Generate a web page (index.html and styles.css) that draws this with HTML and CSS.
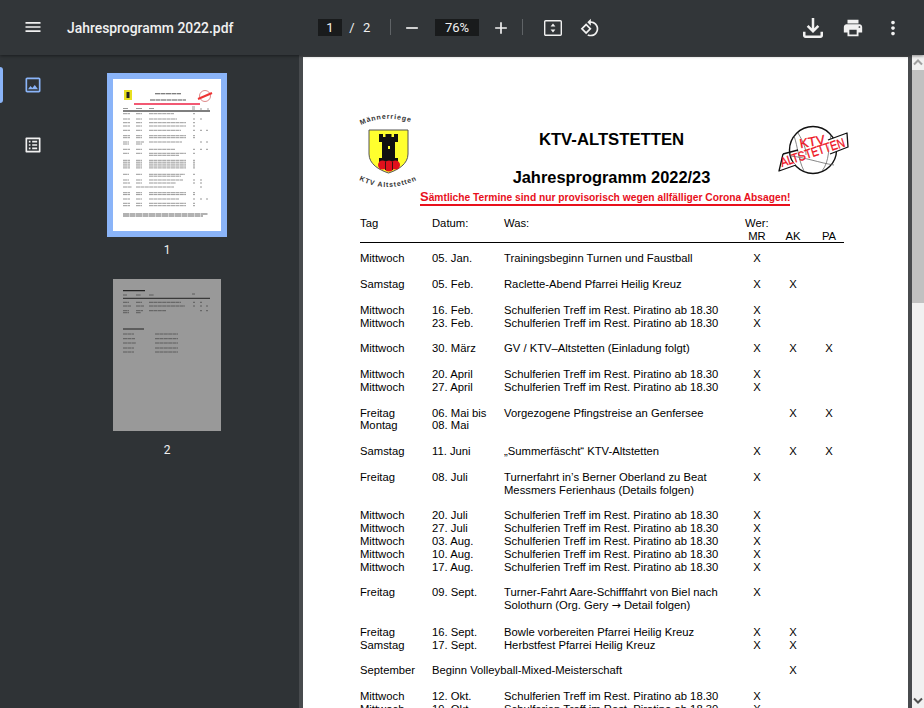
FILE: index.html
```html
<!DOCTYPE html>
<html>
	<head>
		<meta charset="UTF-8">
		<title>Jahresprogramm 2022.pdf</title>
		<link rel="stylesheet" href="styles.css">
	</head>
	<body>
		<div class="toolbar">
			<svg class="ico menu" viewBox="0 0 24 24"><path d="M3 18h18v-2H3v2zm0-5h18v-2H3v2zm0-7v2h18V6H3z"/></svg>
			<div class="filename">Jahresprogramm 2022.pdf</div>
			<div class="page-box">1</div>
			<span class="slash">/</span>
			<span class="total">2</span>
			<div class="sep sep-a"></div>
			<svg class="ico minus" viewBox="0 0 24 24"><path d="M19 13H5v-2h14v2z"/></svg>
			<div class="zoom-box">76%</div>
			<svg class="ico plus" viewBox="0 0 24 24"><path d="M19 13h-6v6h-2v-6H5v-2h6V5h2v6h6v2z"/></svg>
			<div class="sep sep-b"></div>
			<svg class="ico fit" viewBox="0 0 20 18"><rect x="1.7" y="1.7" width="16.6" height="14.6" rx="1" fill="none" stroke="#f1f1f1" stroke-width="1.4"/><path d="M10 4.6l2.4 3h-4.800zM10 13.400l-2.400-3h4.800z"/></svg>
			<svg class="ico rotate" viewBox="0 0 24 24"><path d="M7.340 6.410L.860 12.900l6.490 6.480 6.490-6.480-6.500-6.490zM3.690 12.900l3.660-3.660L11 12.900l-3.660 3.660-3.650-3.660zm15.670-6.260C17.610 4.880 15.300 4 13 4V.760L8.760 5 13 9.240V6c1.790 0 3.580.680 4.950 2.050 2.730 2.730 2.730 7.170 0 9.900C16.580 19.320 14.790 20 13 20c-.970 0-1.940-.210-2.840-.610l-1.490 1.490C10.020 21.620 11.510 22 13 22c2.300 0 4.610-.880 6.360-2.640 3.520-3.510 3.520-9.210 0-12.720z"/></svg>
			<svg class="ico download" viewBox="0 0 24 24"><path d="M18 15v3H6v-3H4v3c0 1.100.900 2 2 2h12c1.100 0 2-.900 2-2v-3h-2zm-1-4l-1.410-1.410L13 12.170V4h-2v8.170L8.410 9.590 7 11l5 5 5-5z"/></svg>
			<svg class="ico print" viewBox="0 0 24 24"><path d="M19 8H5c-1.660 0-3 1.340-3 3v6h4v4h12v-4h4v-6c0-1.660-1.340-3-3-3zm-3 11H8v-5h8v5zm3-7c-.550 0-1-.450-1-1s.450-1 1-1 1 .450 1 1-.450 1-1 1zm-1-9H6v4h12V3z"/></svg>
			<svg class="ico more" viewBox="0 0 24 24"><path d="M12 8c1.100 0 2-.900 2-2s-.900-2-2-2-2 .900-2 2 .900 2 2 2zm0 2c-1.100 0-2 .900-2 2s.900 2 2 2 2-.900 2-2-.900-2-2-2zm0 6c-1.100 0-2 .900-2 2s.900 2 2 2 2-.900 2-2-.900-2-2-2z"/></svg>
		</div>

		<div class="content">
			<div class="sidebar">
				<div class="rail">
					<div class="rail-btn active">
						<svg class="ico" viewBox="0 0 24 24"><path d="M19 5v14H5V5h14m0-2H5c-1.100 0-2 .900-2 2v14c0 1.100.900 2 2 2h14c1.100 0 2-.900 2-2V5c0-1.100-.900-2-2-2zm-4.860 8.860l-3 3.870L9 13.140 6 17h12l-3.860-5.140z"/></svg>
					</div>
					<div class="rail-btn">
						<svg class="ico" viewBox="0 0 24 24"><path d="M19 5v14H5V5h14m1.100-2H3.900c-.500 0-.900.400-.900.900v16.200c0 .400.400.900.900.900h16.200c.400 0 .900-.500.900-.900V3.900c0-.500-.500-.900-.900-.900zM11 7h6v2h-6V7zm0 4h6v2h-6v-2zm0 4h6v2h-6zM7 7h2v2H7zm0 4h2v2H7zm0 4h2v2H7z"/></svg>
					</div>
				</div>
				<div class="thumbs">
					<div class="thumb selected">
						<svg class="thumb-page" viewBox="0 0 108 152">
							<rect x="11" y="11" width="8" height="10" fill="#e8e020"/>
							<rect x="13.500" y="13" width="3" height="6" fill="#222"/>
							<circle cx="92" cy="17" r="5.500" fill="#fff" stroke="#d88" stroke-width="1"/>
							<path d="M85 20l14-6" stroke="#e33" stroke-width="2"/>
							<path d="M42 14.700h26M37 21h36" stroke="#555" stroke-width="1.100" stroke-dasharray="5 .5"/>
							<path d="M21 25h66" stroke="#e24" stroke-width="1.300"/>
							<path d="M10 32h87" stroke="#000" stroke-width="1.100"/>
							<path d="M10 29.500h5M23 29.500h6M36 29.500h5M79 28h3M79 30h3M87 30h2M94 30h2" stroke="#999" stroke-width="1"/>
							<path class="mini" d="M10 34.700h7M23 34.700h6M36 34.700h25M80 34.700h2M10 40h7M23 40h6M36 40h28M80 40h2M87 40h2M10 43.700h7M23 43.700h6M36 43.700h37M80 43.700h2M10 47h7M23 47h6M36 47h37M80 47h2M10 51.300h7M23 51.300h6M36 51.300h32M80 51.300h2M87 51.300h2M93 51.300h2M10 56.700h7M23 56.700h6M36 56.700h37M80 56.700h2M10 58.700h7M23 58.700h6M36 58.700h37M80 58.700h2M10 63h6M23 63h8M36 63h33M87 63h2M93 63h2M10 65h6M23 65h6M10 70.300h7M23 70.300h6M36 70.300h26M80 70.300h2M87 70.300h2M93 70.300h2M10 74.300h6M23 74.300h6M36 74.300h37M80 74.300h2M36 76.300h30M10 81.300h7M23 81.300h6M36 81.300h37M80 81.300h2M10 83.200h7M23 83.200h6M36 83.200h37M80 83.200h2M10 85.100h7M23 85.100h6M36 85.100h37M80 85.100h2M10 87h7M23 87h6M36 87h37M80 87h2M10 88.900h7M23 88.900h6M36 88.900h37M80 88.900h2M10 95.300h6M23 95.300h6M36 95.300h36M80 95.300h2M36 97.200h32M10 101h6M23 101h6M36 101h34M80 101h2M87 101h2M10 104h7M23 104h6M36 104h27M80 104h2M87 104h2M10 108h9M23 108h38M87 108h2M10 113.700h7M23 113.700h6M36 113.700h37M80 113.700h2M10 115.600h7M23 115.600h6M36 115.600h37M80 115.600h2M10 120h7M23 120h6M36 120h30M80 120h2M87 120h2M93 120h2M10 124.300h7M23 124.300h6M36 124.300h37M80 124.300h2M10 126.700h7M23 126.700h6M36 126.700h37M80 126.700h2"/>
							<path d="M10 135h85M10 137h80" stroke="#666" stroke-width="1.200" stroke-dasharray="6 .5"/>
						</svg>
						<div class="thumb-num">1</div>
					</div>
					<div class="thumb">
						<svg class="thumb-page dim" viewBox="0 0 108 152">
							<path d="M10 11.700h22M10 50h21" stroke="#222" stroke-width="1.200"/>
							<path d="M10 19.300h87" stroke="#222" stroke-width="1"/>
							<path class="mini dark" d="M10 16h4M23 16h5M36 16h5M79 15h3M10 23.300h6M23 23.300h6M36 23.300h32M80 23.300h2M87 23.300h2M10 27h8M23 27h8M36 27h36M80 27h2M87 27h2M93 27h2M10 31.700h6M23 31.700h7M36 31.700h17M87 31.700h2M93 31.700h2M10 33.700h6M23 33.700h5M10 55h11M42 55h23M10 59.700h12M42 59.700h23M10 64h13M42 64h23M10 69h11M42 69h23M10 73h11M42 73h23"/>
						</svg>
						<div class="thumb-num">2</div>
					</div>
				</div>
			</div>

			<div class="viewer">
				<div class="page">
					<div class="head">
						<svg class="logo" viewBox="0 0 62 80">
							<defs>
								<path id="arc-top" d="M3 13Q28 1 58 12"/>
								<path id="arc-bottom" d="M1 68Q30 83 63 66"/>
							</defs>
							<text class="logo-txt"><textPath href="#arc-top">Männerriege</textPath></text>
							<text class="logo-txt"><textPath href="#arc-bottom">KTV Altstetten</textPath></text>
							<path d="M11 18H50V42C50 52 40 58 30.500 61C21 58 11 52 11 42Z" fill="#ffff2e" stroke="#555" stroke-width="1"/>
							<path d="M21 22h4v3h2.500v-3h6v3h2.500v-3h4v8h-3v16h3v4h-19v-4h3V30h-3z" fill="#111"/>
							<rect x="30" y="34" width="2" height="3" fill="#ffff2e"/>
							<circle cx="24.500" cy="53" r="4.500" fill="#e0101c"/>
							<circle cx="31" cy="54" r="5.500" fill="#e0101c"/>
							<circle cx="37.500" cy="53" r="4.500" fill="#e0101c"/>
							<path d="M27.500 50v8M34.500 50v8" stroke="#111" stroke-width=".8"/>
						</svg>
						<div class="head-mid">
							<div class="title">KTV-ALTSTETTEN</div>
							<div class="title title-2">Jahresprogramm 2022/23</div>
							<div class="notice"><span class="big-s">S</span>ämtliche Termine sind nur provisorisch wegen allfälliger Corona Absagen!</div>
						</div>
						<svg class="ball" viewBox="0 0 76 54">
							<circle cx="37" cy="27" r="23.500" fill="#fff" stroke="#111" stroke-width="1.400"/>
							<path d="M18 13C22 24 22 36 28 48M22 10C28 20 30 26 30 32M55 12C52 24 54 38 46 48M14 33C28 34 44 40 58 42" fill="none" stroke="#555" stroke-width=".7"/>
							<path d="M7 31L22 27M52 17L71 10L72 24L54 31M20 42L3 48L7 31" fill="#fff" stroke="#111" stroke-width="1.300" stroke-linejoin="round"/>
							<text class="ball-txt" transform="translate(37 23) rotate(-10)" text-anchor="middle">KTV</text>
							<text class="ball-txt" transform="translate(6 44) rotate(-18)" textLength="67" lengthAdjust="spacingAndGlyphs">ALTSTETTEN</text>
						</svg>
					</div>

					<div class="row"><span>Tag</span><span>Datum:</span><span>Was:</span><span class="wer">Wer:</span></div>
					<div class="row row-rule"><span class="mr">MR</span><span class="ak">AK</span><span class="pa">PA</span></div>

					<div class="grp">
						<div class="row"><span>Mittwoch</span><span>05. Jan.</span><span>Trainingsbeginn Turnen und Faustball</span><span class="mr">X</span></div>
					</div>
					<div class="grp">
						<div class="row"><span>Samstag</span><span>05. Feb.</span><span>Raclette-Abend Pfarrei Heilig Kreuz</span><span class="mr">X</span><span class="ak">X</span></div>
					</div>
					<div class="grp">
						<div class="row"><span>Mittwoch</span><span>16. Feb.</span><span>Schulferien Treff im Rest. Piratino ab 18.30</span><span class="mr">X</span></div>
						<div class="row"><span>Mittwoch</span><span>23. Feb.</span><span>Schulferien Treff im Rest. Piratino ab 18.30</span><span class="mr">X</span></div>
					</div>
					<div class="grp">
						<div class="row"><span>Mittwoch</span><span>30. März</span><span>GV / KTV–Altstetten (Einladung folgt)</span><span class="mr">X</span><span class="ak">X</span><span class="pa">X</span></div>
					</div>
					<div class="grp">
						<div class="row"><span>Mittwoch</span><span>20. April</span><span>Schulferien Treff im Rest. Piratino ab 18.30</span><span class="mr">X</span></div>
						<div class="row"><span>Mittwoch</span><span>27. April</span><span>Schulferien Treff im Rest. Piratino ab 18.30</span><span class="mr">X</span></div>
					</div>
					<div class="grp">
						<div class="row"><span>Freitag</span><span>06. Mai bis</span><span>Vorgezogene Pfingstreise an Genfersee</span><span class="ak">X</span><span class="pa">X</span></div>
						<div class="row"><span>Montag</span><span>08. Mai</span></div>
					</div>
					<div class="grp">
						<div class="row"><span>Samstag</span><span>11. Juni</span><span>„Summerfäscht“ KTV-Altstetten</span><span class="mr">X</span><span class="ak">X</span><span class="pa">X</span></div>
					</div>
					<div class="grp">
						<div class="row"><span>Freitag</span><span>08. Juli</span><span>Turnerfahrt in’s Berner Oberland zu Beat<br>Messmers Ferienhaus (Details folgen)</span><span class="mr">X</span></div>
					</div>
					<div class="grp">
						<div class="row"><span>Mittwoch</span><span>20. Juli</span><span>Schulferien Treff im Rest. Piratino ab 18.30</span><span class="mr">X</span></div>
						<div class="row"><span>Mittwoch</span><span>27. Juli</span><span>Schulferien Treff im Rest. Piratino ab 18.30</span><span class="mr">X</span></div>
						<div class="row"><span>Mittwoch</span><span>03. Aug.</span><span>Schulferien Treff im Rest. Piratino ab 18.30</span><span class="mr">X</span></div>
						<div class="row"><span>Mittwoch</span><span>10. Aug.</span><span>Schulferien Treff im Rest. Piratino ab 18.30</span><span class="mr">X</span></div>
						<div class="row"><span>Mittwoch</span><span>17. Aug.</span><span>Schulferien Treff im Rest. Piratino ab 18.30</span><span class="mr">X</span></div>
					</div>
					<div class="grp">
						<div class="row"><span>Freitag</span><span>09. Sept.</span><span>Turner-Fahrt Aare-Schifffahrt von Biel nach<br>Solothurn (Org. Gery <span class="arrow">→</span> Detail folgen)</span><span class="mr">X</span></div>
					</div>
					<div class="grp">
						<div class="row"><span>Freitag</span><span>16. Sept.</span><span>Bowle vorbereiten Pfarrei Heilig Kreuz</span><span class="mr">X</span><span class="ak">X</span></div>
						<div class="row"><span>Samstag</span><span>17. Sept.</span><span>Herbstfest Pfarrei Heilig Kreuz</span><span class="mr">X</span><span class="ak">X</span></div>
					</div>
					<div class="grp">
						<div class="row"><span>September</span><span class="wide">Beginn Volleyball-Mixed-Meisterschaft</span><span class="ak">X</span></div>
					</div>
					<div class="grp">
						<div class="row"><span>Mittwoch</span><span>12. Okt.</span><span>Schulferien Treff im Rest. Piratino ab 18.30</span><span class="mr">X</span></div>
						<div class="row"><span>Mittwoch</span><span>19. Okt.</span><span>Schulferien Treff im Rest. Piratino ab 18.30</span><span class="mr">X</span></div>
					</div>
				</div>
				<div class="scrollbar">
					<div class="sb-btn"><svg viewBox="0 0 12 12"><path d="M2 8l4-4 4 4" fill="none" stroke="#a0a0a0" stroke-width="2"/></svg></div>
					<div class="sb-thumb"></div>
					<div class="sb-track"></div>
					<div class="sb-btn"><svg viewBox="0 0 12 12"><path d="M2 4l4 4 4-4" fill="none" stroke="#505050" stroke-width="2"/></svg></div>
				</div>
			</div>
		</div>
	</body>
</html>
```

FILE: styles.css
```css
html,body{
	margin: 0;
	height: 100%;
	overflow: hidden;
}
body{
	display: flex;
	flex-direction: column;
	background: #323639;
	font-family: Roboto,"Liberation Sans",sans-serif;
}
.ico{
	display: block;
	flex: none;
	fill: #f1f1f1;
}

/* toolbar */
.toolbar{
	flex: none;
	position: relative;
	z-index: 2;
	display: flex;
	align-items: center;
	height: 55px;
	background: #323639;
	color: #f1f1f1;
	box-shadow: 0 1px 3px rgba(0,0,0,.45);
	font-size: 13px;
}
.menu{
	width: 20px;
	height: 20px;
	margin: 0 0 1px 23px;
}
.filename{
	width: 251px;
	margin-left: 24px;
	font-size: 13.900px;
	font-weight: 500;
	white-space: nowrap;
}
.page-box,.zoom-box{
	height: 17px;
	line-height: 17px;
	margin-top: -1px;
	background: #191b1c;
	text-align: center;
}
.page-box{
	width: 24px;
}
.slash{
	margin-left: 4px;
	width: 12px;
	text-align: center;
}
.total{
	margin-left: 5px;
	width: 10px;
}
.sep{
	width: 1px;
	height: 16px;
	margin-top: -1px;
	background: #5f6366;
}
.sep-a{
	margin-left: 17px;
}
.minus{
	width: 20px;
	height: 20px;
	margin-left: 11px;
}
.zoom-box{
	width: 44px;
	margin-left: 13px;
}
.plus{
	width: 20px;
	height: 20px;
	margin-left: 12px;
}
.sep-b{
	margin-left: 11px;
}
.fit{
	width: 20px;
	height: 18px;
	margin-left: 20px;
}
.rotate{
	width: 20px;
	height: 20px;
	margin-left: 17px;
}
.download{
	width: 30px;
	height: 30px;
	margin-left: auto;
}
.print{
	width: 22px;
	height: 22px;
	margin-left: 14px;
}
.more{
	width: 22px;
	height: 22px;
	margin: 0 20px 0 18px;
}

/* main area */
.content{
	flex: 1;
	display: flex;
	min-height: 0;
}
.sidebar{
	flex: none;
	display: flex;
	width: 299px;
	background: #2f3336;
}
.rail{
	flex: none;
	width: 66px;
	padding-top: 10px;
}
.rail-btn{
	position: relative;
	display: flex;
	align-items: center;
	justify-content: center;
	height: 40px;
	margin-bottom: 20px;
}
.rail-btn .ico{
	width: 20px;
	height: 20px;
}
.rail-btn.active .ico{
	fill: #8ab4f8;
}
.rail-btn.active::before{
	content: "";
	position: absolute;
	left: 0;
	top: 2px;
	width: 3px;
	height: 36px;
	background: #8ab4f8;
	border-radius: 0 3px 3px 0;
}
.thumbs{
	flex: 1;
	padding: 18px 31px 0 0;
}
.thumb{
	display: flex;
	flex-direction: column;
	align-items: center;
	margin-bottom: 15px;
}
.thumb-page{
	display: block;
	width: 108px;
	height: 152px;
	background: #fff;
	background-clip: content-box;
	border: 6px solid transparent;
}
.thumb.selected .thumb-page{
	border-color: #8ab4f8;
}
.thumb-page.dim{
	background: #999;
	background-clip: content-box;
}
.mini{
	fill: none;
	stroke: #999;
	stroke-width: 1;
	stroke-dasharray: 4 .4;
}
.mini.dark{
	stroke: #5c5c5c;
}
.thumb-num{
	margin-top: 5px;
	line-height: 16px;
	font-size: 12px;
	color: #f1f1f1;
}

.viewer{
	flex: 1;
	display: flex;
	min-width: 0;
	background: #484b4e;
	padding-left: 4px;
}
.page{
	flex: none;
	width: 548px;
	height: 858px;
	margin-top: 2px;
	padding: 55px 0 0 57px;
	background: #fff;
	color: #000;
	font-family: "Liberation Sans",Arial,sans-serif;
	font-size: 11.250px;
}
.head{
	display: flex;
	height: 104.800px;
}
.logo{
	flex: none;
	width: 62px;
	height: 80px;
	margin-left: -2px;
}
.logo-txt{
	font-size: 7px;
	font-weight: bold;
	letter-spacing: .9px;
	fill: #333;
}
.head-mid{
	flex: none;
	width: 383px;
	padding-top: 19px;
}
.title{
	line-height: 18px;
	font-size: 16.700px;
	font-weight: bold;
	text-align: center;
}
.title-2{
	margin-top: 19px;
	font-size: 16.400px;
}
.notice{
	width: 370px;
	margin-top: 4.500px;
	border-bottom: 2px solid #e8101c;
	line-height: 12px;
	font-size: 10.250px;
	font-weight: bold;
	color: #e8101c;
	white-space: nowrap;
}
.big-s{
	font-size: 13px;
}
.ball{
	flex: none;
	width: 76px;
	height: 54px;
	margin: 11px 0 0 -27px;
}
.ball-txt{
	font-size: 13px;
	fill: #ee1122;
	stroke: #ee1122;
	stroke-width: .3px;
}

/* table */
.row{
	display: grid;
	grid-template-columns: 72px 72px 235px 36px 36px 36px;
	width: 484px;
	line-height: 12.840px;
	white-space: nowrap;
}
.row-rule{
	border-bottom: 1px solid #000;
	margin-bottom: 9px;
	padding-bottom: 0;
}
.wer{
	margin-left: 6px;
}
.wide{
	grid-column: 2 / span 2;
}
.arrow{
	font-family: "DejaVu Sans",sans-serif;
	font-size: 11px;
}
.mr,.ak,.pa{
	grid-row: 1;
	text-align: center;
}
.mr{
	grid-column: 4;
}
.ak{
	grid-column: 5;
}
.pa{
	grid-column: 6;
}
.grp{
	margin-bottom: 12.840px;
}

/* scrollbar */
.scrollbar{
	flex: none;
	display: flex;
	flex-direction: column;
	width: 12px;
	margin-left: auto;
	background: #f1f1f1;
}
.sb-btn{
	flex: none;
	height: 15px;
}
.sb-btn svg{
	display: block;
	width: 12px;
	height: 15px;
}
.sb-thumb{
	flex: none;
	height: 233px;
	background: #c1c1c1;
}
.sb-track{
	flex: 1;
}
```
